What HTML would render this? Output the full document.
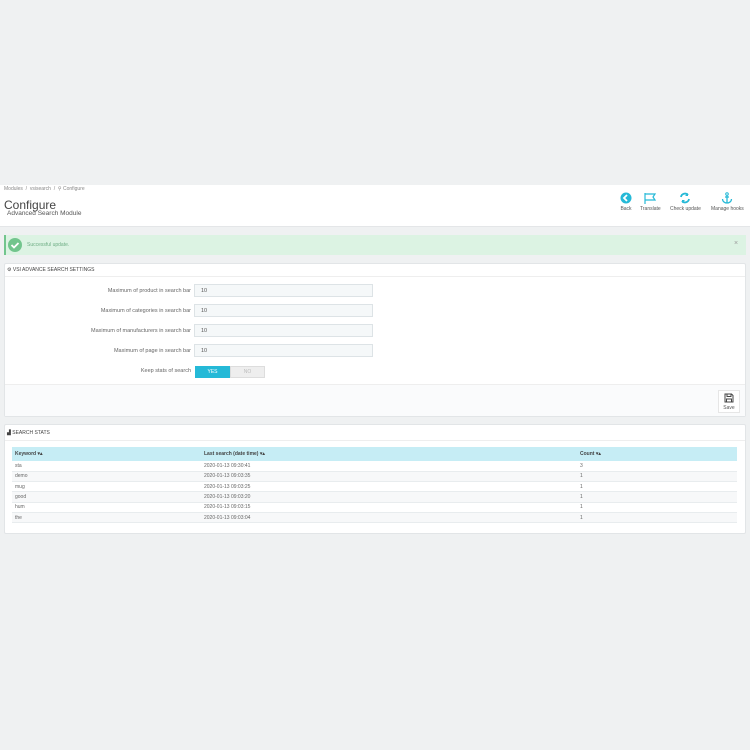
<!DOCTYPE html>
<html><head><style>
*{margin:0;padding:0;box-sizing:border-box}
body{width:750px;height:750px;background:#eff1f2;font-family:"Liberation Sans",sans-serif;color:#555;position:relative;overflow:hidden}
.a{position:absolute}
.hdr{left:0;top:185px;width:750px;height:42px;background:#fff;border-bottom:1px solid #e4e6e8}
.bc{left:4px;top:186px;font-size:5px;color:#888}
h1{position:absolute;left:4px;top:198px;font-size:12px;font-weight:normal;color:#444}
.sub{left:7px;top:210px;font-size:6.5px;color:#555}
.tb{top:192px;text-align:center;font-size:5px;color:#555}
.alert{left:4px;top:235px;width:742px;height:20px;background:#dcf3e3;border-left:2px solid #72c58d}
.panel{background:#fff;border:1px solid #e2e5e7;border-radius:2px}
.lbl{font-size:5.5px;color:#666;text-align:right;width:186px;left:5px}
.inp{left:194px;width:179px;height:13px;background:#f5f8f9;border:1px solid #dde3e6;font-size:5.5px;padding:3px 6px;color:#555}
table{position:absolute;left:12px;top:447px;width:725px;border-collapse:collapse;font-size:5px;color:#666}
th{background:#c6edf5;height:14px;text-align:left;padding-left:3px;font-weight:bold;color:#444}
td{height:10.3px;padding-left:3px;border-bottom:1px solid #e8ecee}
tr:nth-child(odd) td{background:#f7f8f9}
</style></head><body>
<div class="a hdr"></div>
<div class="a bc">Modules &nbsp;/&nbsp; vsisearch &nbsp;/&nbsp; ⚲ Configure</div>
<h1>Configure</h1>
<div class="a sub">Advanced Search Module</div>
<div class="a tb" style="left:620px"><svg width="12" height="12" viewBox="0 0 12 12"><circle cx="6" cy="6" r="5.5" fill="#25b9d7"/><path d="M7 3L4 6l3 3" stroke="#fff" stroke-width="1.8" fill="none"/></svg><br>Back</div>
<div class="a tb" style="left:640px"><svg width="14" height="12" viewBox="0 0 14 12"><path d="M2 1v11M2 2h10l-2 3 2 3H2" stroke="#25b9d7" stroke-width="1.2" fill="none"/></svg><br>Translate</div>
<div class="a tb" style="left:670px"><svg width="12" height="12" viewBox="0 0 12 12"><path d="M2 5a4 4 0 0 1 7-2M10 7a4 4 0 0 1-7 2" stroke="#25b9d7" stroke-width="1.8" fill="none"/><path d="M9 1v3H6zM3 11V8h3z" fill="#25b9d7"/></svg><br>Check update</div>
<div class="a tb" style="left:711px"><svg width="12" height="12" viewBox="0 0 12 12"><circle cx="6" cy="2" r="1.3" stroke="#25b9d7" fill="none"/><path d="M6 3v8M4 5h4M1.5 7a4.5 4 0 0 0 9 0" stroke="#25b9d7" stroke-width="1.3" fill="none"/></svg><br>Manage hooks</div>
<div class="a alert"></div>
<svg class="a" style="left:8px;top:238px" width="14" height="14"><circle cx="7" cy="7" r="7" fill="#72c58d"/><path d="M3.5 7l2.5 2.5 4.5-4.5" stroke="#fff" stroke-width="1.8" fill="none"/></svg>
<div class="a" style="left:27px;top:242px;font-size:5px;color:#6fae85">Successful update.</div>
<div class="a" style="left:734px;top:240px;font-size:7px;color:#999">×</div>
<div class="a panel" style="left:4px;top:263px;width:742px;height:154px"></div>
<div class="a" style="left:5px;top:276px;width:740px;height:1px;background:#eee"></div>
<div class="a" style="left:7px;top:267px;font-size:5px;color:#444">⚙ VSI ADVANCE SEARCH SETTINGS</div>
<div class="a lbl" style="top:288px">Maximum of product in search bar</div>
<div class="a inp" style="top:284px">10</div>
<div class="a lbl" style="top:308px">Maximum of categories in search bar</div>
<div class="a inp" style="top:304px">10</div>
<div class="a lbl" style="top:328px">Maximum of manufacturers in search bar</div>
<div class="a inp" style="top:324px">10</div>
<div class="a lbl" style="top:348px">Maximum of page in search bar</div>
<div class="a inp" style="top:344px">10</div>
<div class="a lbl" style="top:368px">Keep stats of search</div>
<div class="a" style="left:195px;top:366px;width:35px;height:12px;background:#25b9d7;color:#fff;font-size:5px;text-align:center;line-height:12px">YES</div>
<div class="a" style="left:230px;top:366px;width:35px;height:12px;background:#eee;border:1px solid #ddd;color:#bbb;font-size:5px;text-align:center;line-height:10px">NO</div>
<div class="a" style="left:5px;top:384px;width:740px;height:32px;background:#fafbfc;border-top:1px solid #eee"></div>
<div class="a" style="left:718px;top:390px;width:22px;height:23px;background:#fff;border:1px solid #e6e6e6;text-align:center;font-size:5px;color:#555;padding-top:2px"><svg width="10" height="10" viewBox="0 0 10 10"><path d="M1 1h6.5L9 2.5V9H1z" stroke="#444" fill="none"/><path d="M3 1v2.5h4V1M2.5 9V6h5v3" stroke="#444" fill="none"/></svg><br>Save</div>
<div class="a panel" style="left:4px;top:424px;width:742px;height:110px"></div>
<div class="a" style="left:5px;top:440px;width:740px;height:1px;background:#eee"></div>
<div class="a" style="left:7px;top:430px;font-size:5px;color:#444">▟ SEARCH STATS</div>
<table>
<tr><th style="width:189px">Keyword ▾▴</th><th style="width:376px">Last search (date time) ▾▴</th><th>Count ▾▴</th></tr>
<tr><td>sta</td><td>2020-01-13 09:30:41</td><td>3</td></tr>
<tr><td>demo</td><td>2020-01-13 09:03:35</td><td>1</td></tr>
<tr><td>mug</td><td>2020-01-13 09:03:25</td><td>1</td></tr>
<tr><td>good</td><td>2020-01-13 09:03:20</td><td>1</td></tr>
<tr><td>hum</td><td>2020-01-13 09:03:15</td><td>1</td></tr>
<tr><td>the</td><td>2020-01-13 09:03:04</td><td>1</td></tr>
</table>
</body></html>
